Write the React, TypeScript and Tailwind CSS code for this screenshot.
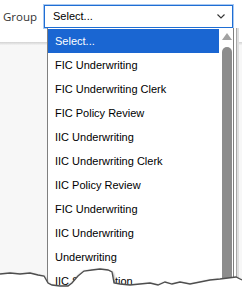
import React from 'react';

const items = [
  'Select...',
  'FIC Underwriting',
  'FIC Underwriting Clerk',
  'FIC Policy Review',
  'IIC Underwriting',
  'IIC Underwriting Clerk',
  'IIC Policy Review',
  'FIC Underwriting',
  'IIC Underwriting',
  'Underwriting',
  'IIC Subscription',
];

// jagged "torn paper" edge of the screenshot
const edge: [number, number][] = [
  [0, 274], [10, 273], [20, 274], [30, 273], [38, 275], [44, 276], [48, 283], [52, 285],
  [60, 286], [68, 286], [72, 283], [78, 276], [84, 271], [92, 270], [100, 269], [108, 270],
  [112, 272], [114, 283], [120, 284], [130, 285], [140, 284], [150, 283], [158, 285],
  [165, 282], [172, 284], [180, 282], [190, 284], [200, 282], [210, 280], [220, 279],
  [228, 278], [236, 277], [240, 279], [242, 280],
];

const line = edge.map(([x, y]) => `${x},${y}`).join(' ');

export default function App() {
  return (
    <div className="relative w-[242px] h-[305px] overflow-hidden bg-white flex flex-col">
      <div className="h-[42px] flex items-start pt-[5px] bg-white">
        <span className="w-[44px] pl-[3px] leading-[23px] text-[11.5px] text-[#333] font-['Open_Sans',sans-serif]">
          Group
        </span>
        <div className="w-[189px] h-[23px] border border-[#1f6ed4] ring-1 ring-[#a9c9f1] flex items-center justify-between pl-[8px] pr-[7px] bg-white">
          <span className="text-[11px] text-black font-['Liberation_Sans',Arial,sans-serif]">Select...</span>
          <svg width="8" height="5" viewBox="0 0 8 5" fill="none">
            <path d="M0.5 0.5 L4 4 L7.5 0.5" stroke="#333" strokeWidth="1.1" />
          </svg>
        </div>
      </div>
      <div className="h-[3px] bg-gradient-to-b from-[#d2d2d2] to-[#f3f3f3]" />
      <div className="flex-1 bg-[#f7f7f7]" />

      <div className="absolute left-[47px] top-[28px] w-[187px] h-[270px] bg-white border-x border-[#7f7f7f] shadow-[2px_0_0_#fff,3px_0_0_#a8a8a8,5px_0_0_#dedede] flex pt-[1px]">
        <ul className="flex-1 font-['Liberation_Sans',Arial,sans-serif] text-[11px] text-black">
          {items.map((it, i) => (
            <li
              key={i}
              className={
                'h-[24px] flex items-center pl-[7px] ' +
                (i === 0 ? 'bg-[#1a66d2] text-white' : '')
              }
            >
              {it}
            </li>
          ))}
        </ul>
        <div className="w-[14px] flex flex-col items-center pt-[4px] pl-[1px]">
          <svg width="10" height="7" viewBox="0 0 10 7">
            <path d="M5 0 L10 7 L0 7 Z" fill="#a2a2a2" />
          </svg>
          <div className="mt-[7px] w-[10px] flex-1 bg-[#8c8c8c] rounded-t-[5px]" />
        </div>
      </div>

      <svg className="absolute left-0 top-0" width="242" height="305" viewBox="0 0 242 305">
        <defs>
          <filter id="blur" x="-5%" y="-50%" width="110%" height="200%">
            <feGaussianBlur stdDeviation="1.2" />
          </filter>
        </defs>
        <polyline points={line} transform="translate(0,2)" fill="none" stroke="#8a8a8a" strokeWidth="3" filter="url(#blur)" />
        <polygon points={`${line} 242,305 0,305`} fill="#fff" />
        <polyline points={line} fill="none" stroke="#4e4e4e" strokeWidth="1.3" />
      </svg>
    </div>
  );
}
